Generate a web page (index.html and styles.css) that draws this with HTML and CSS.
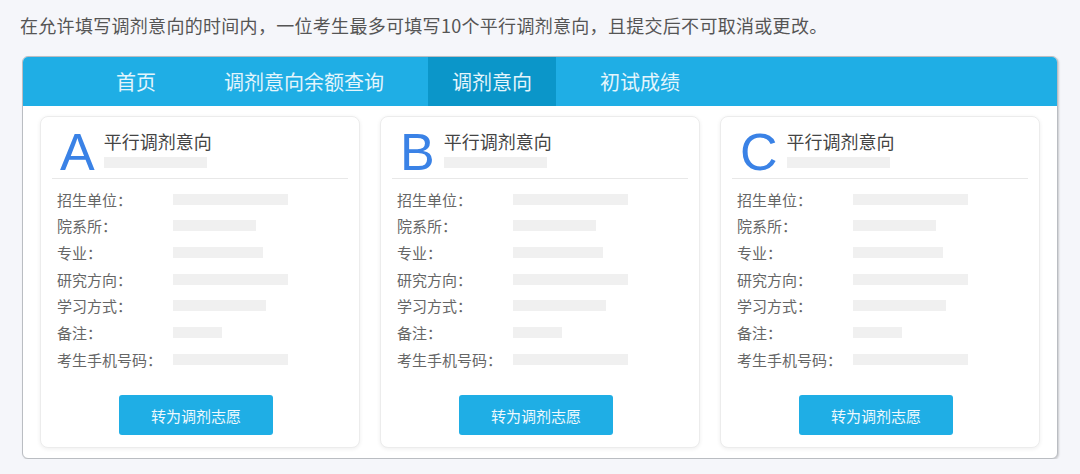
FILE: index.html
```html
<!DOCTYPE html>
<html lang="zh-CN">
<head>
<meta charset="utf-8">
<title>调剂意向</title>
<link rel="stylesheet" href="styles.css">
</head>
<body>
<p class="intro">在允许填写调剂意向的时间内，一位考生最多可填写10个平行调剂意向，且提交后不可取消或更改。</p>
<div class="panel">
  <nav class="tabs">
    <a class="tab">首页</a>
    <a class="tab">调剂意向余额查询</a>
    <a class="tab active">调剂意向</a>
    <a class="tab">初试成绩</a>
  </nav>
  <div class="cards">
    <section class="card">
      <header class="card-head">
        <span class="letter">A</span>
        <div class="head-text">
          <h3 class="title">平行调剂意向</h3>
          <div class="ph ph-head"></div>
        </div>
      </header>
      <dl class="fields">
        <div class="row"><dt>招生单位：</dt><dd><span class="ph w-lg"></span></dd></div>
        <div class="row"><dt>院系所：</dt><dd><span class="ph w-83"></span></dd></div>
        <div class="row"><dt>专业：</dt><dd><span class="ph w-90"></span></dd></div>
        <div class="row"><dt>研究方向：</dt><dd><span class="ph w-lg"></span></dd></div>
        <div class="row"><dt>学习方式：</dt><dd><span class="ph w-93"></span></dd></div>
        <div class="row"><dt>备注：</dt><dd><span class="ph w-sm"></span></dd></div>
        <div class="row"><dt>考生手机号码：</dt><dd><span class="ph w-lg"></span></dd></div>
      </dl>
      <div class="actions"><button class="btn">转为调剂志愿</button></div>
    </section>
    <section class="card">
      <header class="card-head">
        <span class="letter">B</span>
        <div class="head-text">
          <h3 class="title">平行调剂意向</h3>
          <div class="ph ph-head"></div>
        </div>
      </header>
      <dl class="fields">
        <div class="row"><dt>招生单位：</dt><dd><span class="ph w-lg"></span></dd></div>
        <div class="row"><dt>院系所：</dt><dd><span class="ph w-83"></span></dd></div>
        <div class="row"><dt>专业：</dt><dd><span class="ph w-90"></span></dd></div>
        <div class="row"><dt>研究方向：</dt><dd><span class="ph w-lg"></span></dd></div>
        <div class="row"><dt>学习方式：</dt><dd><span class="ph w-93"></span></dd></div>
        <div class="row"><dt>备注：</dt><dd><span class="ph w-sm"></span></dd></div>
        <div class="row"><dt>考生手机号码：</dt><dd><span class="ph w-lg"></span></dd></div>
      </dl>
      <div class="actions"><button class="btn">转为调剂志愿</button></div>
    </section>
    <section class="card">
      <header class="card-head">
        <span class="letter">C</span>
        <div class="head-text">
          <h3 class="title">平行调剂意向</h3>
          <div class="ph ph-head"></div>
        </div>
      </header>
      <dl class="fields">
        <div class="row"><dt>招生单位：</dt><dd><span class="ph w-lg"></span></dd></div>
        <div class="row"><dt>院系所：</dt><dd><span class="ph w-83"></span></dd></div>
        <div class="row"><dt>专业：</dt><dd><span class="ph w-90"></span></dd></div>
        <div class="row"><dt>研究方向：</dt><dd><span class="ph w-lg"></span></dd></div>
        <div class="row"><dt>学习方式：</dt><dd><span class="ph w-93"></span></dd></div>
        <div class="row"><dt>备注：</dt><dd><span class="ph w-sm"></span></dd></div>
        <div class="row"><dt>考生手机号码：</dt><dd><span class="ph w-lg"></span></dd></div>
      </dl>
      <div class="actions"><button class="btn">转为调剂志愿</button></div>
    </section>
  </div>
</div>
</body>
</html>
```

FILE: styles.css
```css
html, body {
  margin: 0;
  padding: 0;
  background: #f5f6fa;
  font-family: "Noto Sans CJK SC", "Noto Sans", sans-serif;
}

.intro {
  margin: 0;
  padding: 13px 0 0 20px;
  font-size: 18px;
  line-height: 24px;
  letter-spacing: 0.3px;
  color: #555;
}

.panel {
  box-sizing: border-box;
  width: 1036px;
  margin: 19px 0 0 22px;
  border: 1px solid #babdc2;
  border-radius: 6px;
  background: #fff;
  box-shadow: 1px 1px 2px rgba(0, 0, 0, 0.18);
  overflow: hidden;
}

.tabs {
  display: flex;
  gap: 20px;
  height: 49px;
  padding-left: 69px;
  background: #1faee5;
}

.tab {
  padding: 0 24px;
  font-size: 20px;
  line-height: 49px;
  color: #e3f5fc;
}

.tab.active {
  background: #0b96c9;
}

.cards {
  display: flex;
  gap: 20px;
  padding: 10px 17px;
}

.card {
  box-sizing: border-box;
  display: flex;
  flex-direction: column;
  width: 320px;
  height: 332px;
  padding: 0 11px;
  background: #fff;
  border: 1px solid #ececec;
  border-radius: 8px;
  box-shadow: 0 1px 4px rgba(0, 0, 0, 0.07);
}

.card-head {
  box-sizing: border-box;
  display: flex;
  align-items: flex-start;
  height: 62px;
  padding: 9px 0 0 8px;
  border-bottom: 1px solid #e8e8e8;
}

.letter {
  font-family: "Liberation Sans", Arial, sans-serif;
  font-size: 52px;
  line-height: 52px;
  color: #3a82e6;
}

.head-text {
  margin-left: 9px;
  padding-top: 4px;
}

.title {
  margin: 0;
  font-size: 18px;
  line-height: 23px;
  font-weight: normal;
  color: #444;
}

.ph {
  display: block;
  height: 11px;
  background: #f0f0f0;
}

.ph-head {
  width: 103px;
  margin-top: 4px;
}

.w-lg { width: 115px; }
.w-83 { width: 83px; }
.w-90 { width: 90px; }
.w-93 { width: 93px; }
.w-sm { width: 49px; }

.fields {
  margin: 0;
  padding: 7px 0 0 5px;
}

.row {
  display: flex;
  align-items: center;
  height: 26.67px;
}

.row dt {
  width: 116px;
  font-size: 15px;
  color: #666;
}

.row dd {
  margin: 0;
}

.actions {
  display: flex;
  justify-content: center;
  margin-top: auto;
  padding: 0 8px 12px 0;
}

.btn {
  width: 154px;
  height: 40px;
  border: 0;
  border-radius: 3px;
  background: #1faee5;
  color: #eef9fe;
  font-family: inherit;
  font-size: 15px;
}
```
